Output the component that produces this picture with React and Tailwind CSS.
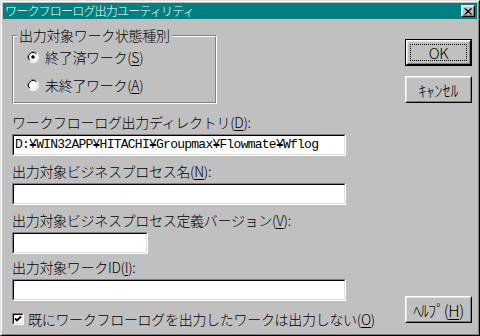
import React from 'react';

const JP = "font-['Noto_Sans_CJK_JP',sans-serif]";

function U({ children }) {
  return <span className="underline underline-offset-[2px]">{children}</span>;
}

function Raised({ className = '', children }) {
  return (
    <div className={`border border-t-white border-l-white border-b-black border-r-black ${className}`}>
      <div className="flex h-full w-full items-center justify-center border border-t-[#dfdfdf] border-l-[#dfdfdf] border-b-[#808080] border-r-[#808080] bg-[#c0c0c0]">
        {children}
      </div>
    </div>
  );
}

function Button({ children, isDefault, className = '' }) {
  if (isDefault) {
    return (
      <div className={`border border-black ${className}`}>
        <Raised className="h-full w-full">
          <div className="flex h-[calc(100%-4px)] w-[calc(100%-4px)] items-center justify-center border border-dotted border-black">
            {children}
          </div>
        </Raised>
      </div>
    );
  }
  return <Raised className={className}>{children}</Raised>;
}

function Edit({ w, children }) {
  return (
    <div className={`${w} h-[22px] border border-t-[#808080] border-l-[#808080] border-b-white border-r-white`}>
      <div className="flex h-full items-center border border-t-black border-l-black border-b-[#dfdfdf] border-r-[#dfdfdf] bg-white pl-px font-['Liberation_Mono',monospace] text-[13px] tracking-[-0.75px] text-black">
        {children}
      </div>
    </div>
  );
}

function Radio({ checked }) {
  return (
    <svg width="12" height="12" viewBox="0 0 12 12" className="shrink-0">
      <circle cx="6" cy="6" r="5.5" fill="#fff" stroke="#fff" />
      <path d="M2.11 9.89 A5.5 5.5 0 0 1 9.89 2.11" fill="none" stroke="#808080" />
      <circle cx="6" cy="6" r="4.5" fill="#fff" stroke="#dfdfdf" />
      <path d="M2.82 9.18 A4.5 4.5 0 0 1 9.18 2.82" fill="none" stroke="#000" />
      {checked ? <circle cx="6" cy="6" r="1.8" fill="#000" /> : null}
    </svg>
  );
}

function Field({ label, w, value }) {
  return (
    <div className="flex flex-col">
      <div className="flex h-[27px] items-end pb-[4px] leading-[16px]">{label}</div>
      <Edit w={w}>{value}</Edit>
    </div>
  );
}

export default function App() {
  return (
    <div className={`h-[336px] w-[480px] bg-[#c0c0c0] ${JP} text-[14px] font-light tracking-[-0.3px] text-black`}>
      <div className="h-full w-full border border-t-[#dfdfdf] border-l-[#dfdfdf] border-b-black border-r-black">
        <div className="flex h-full w-full flex-col border border-t-white border-l-white border-b-[#808080] border-r-[#808080] p-px">
          {/* title bar */}
          <div className="flex h-[16px] shrink-0 items-center justify-between bg-[#008080] pl-[2px] pr-[2px]">
            <span className="text-[12px] leading-[16px] tracking-[-0.8px] text-white">ワークフローログ出力ユーティリティ</span>
            <Raised className="h-[12px] w-[14px]">
              <svg width="8" height="7" viewBox="0 0 8 7">
                <path d="M0.5 0.5 L7 6.5 M1.5 0.5 L8 6.5 M7 0.5 L0.5 6.5 M8 0.5 L1.5 6.5" stroke="#000" strokeWidth="1" />
              </svg>
            </Raised>
          </div>

          {/* body */}
          <div className="flex min-h-0 flex-1 pl-[9px] pr-[5px]">
            <div className="flex flex-col pt-[16px]">
              <div className="relative h-[69px] w-[205px] border border-t-[#808080] border-l-[#808080] border-b-white border-r-white">
                <div className="h-full w-full border border-t-white border-l-white border-b-[#808080] border-r-[#808080] pl-[13px] pt-[14px]">
                  <div className="flex flex-col gap-[16px]">
                    <div className="flex h-[12px] items-center gap-[6px] leading-[16px]">
                      <Radio checked />
                      <span>終了済ワーク(<U>S</U>)</span>
                    </div>
                    <div className="flex h-[12px] items-center gap-[6px] leading-[16px]">
                      <Radio />
                      <span>未終了ワーク(<U>A</U>)</span>
                    </div>
                  </div>
                </div>
                <span className="absolute left-[4px] top-[-9px] bg-[#c0c0c0] px-[2px] leading-[16px]">出力対象ワーク状態種別</span>
              </div>

              <div className="mt-[3px] flex flex-col">
                <Field
                  label={<span>ワークフローログ出力ディレクトリ(<U>D</U>):</span>}
                  w="w-[334px]"
                  value="D:¥WIN32APP¥HITACHI¥Groupmax¥Flowmate¥Wflog"
                />
                <Field label={<span>出力対象ビジネスプロセス名(<U>N</U>):</span>} w="w-[334px]" />
                <Field label={<span>出力対象ビジネスプロセス定義バージョン(<U>V</U>):</span>} w="w-[136px]" />
                <div className="flex flex-col">
                  <div className="flex h-[25px] items-end pb-[4px] leading-[16px]">
                    <span>出力対象ワークID(<U>I</U>):</span>
                  </div>
                  <Edit w="w-[334px]" />
                </div>
              </div>

              <div className="mt-[11px] flex h-[13px] items-center gap-[4px] leading-[16px]">
                <div className="h-[12px] w-[12px] shrink-0 border border-t-[#808080] border-l-[#808080] border-b-white border-r-white">
                  <div className="flex h-full w-full items-center justify-center border border-t-black border-l-black border-b-[#dfdfdf] border-r-[#dfdfdf] bg-white">
                    <svg width="8" height="8" viewBox="0 0 8 8">
                      <path d="M1 3.5 L3 5.5 L7 1.5" fill="none" stroke="#000" strokeWidth="1.8" />
                    </svg>
                  </div>
                </div>
                <span>既にワークフローログを出力したワークは出力しない(<U>O</U>)</span>
              </div>
            </div>

            <div className="ml-auto flex flex-col pb-[10px] pt-[20px]">
              <Button isDefault className="h-[27px] w-[67px]">
                <span className="text-[15px] leading-[16px]">OK</span>
              </Button>
              <Button className="mt-[10px] h-[27px] w-[67px]">
                <span className="text-[16px] leading-[16px] tracking-[0px]">ｷｬﾝｾﾙ</span>
              </Button>
              <Button className="mt-auto h-[27px] w-[67px]">
                <span className="text-[16px] leading-[16px] tracking-[-0.5px]">ﾍﾙﾌﾟ(<U>H</U>)</span>
              </Button>
            </div>
          </div>
        </div>
      </div>
    </div>
  );
}
